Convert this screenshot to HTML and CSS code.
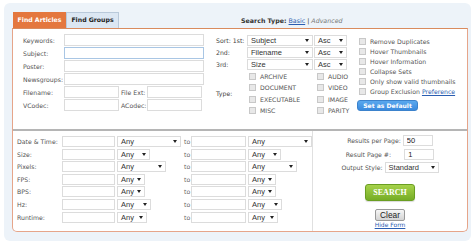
FILE: index.html
```html
<!DOCTYPE html>
<html>
<head>
  <title>Find Articles</title>
  <link rel="stylesheet" href="styles.css">
</head>
<body>
  <div class="wrap">
    <div class="tabbar">
      <span class="tab active">Find Articles</span>
      <span class="tab other">Find Groups</span>
      <div class="stype"><b>Search Type:</b> <a href="#">Basic</a> | <i>Advanced</i></div>
    </div>

    <div class="panel">
      <div class="upper">
        <div class="fields">
          <div class="row"><label>Keywords:</label><input class="inp wide" type="text"></div>
          <div class="row"><label>Subject:</label><input class="inp wide focus" type="text"></div>
          <div class="row"><label>Poster:</label><input class="inp wide" type="text"></div>
          <div class="row"><label>Newsgroups:</label><input class="inp wide" type="text"></div>
          <div class="row"><label>Filename:</label><input class="inp half" type="text"><label class="mid">File Ext:</label><input class="inp half" type="text"></div>
          <div class="row"><label>VCodec:</label><input class="inp half" type="text"><label class="mid">ACodec:</label><input class="inp half" type="text"></div>
        </div>

        <div class="sorts">
          <div class="row"><label>Sort: 1st:</label><span class="sel s-field">Subject</span><span class="sel s-dir">Asc</span></div>
          <div class="row"><label>2nd:</label><span class="sel s-field">Filename</span><span class="sel s-dir">Asc</span></div>
          <div class="row"><label>3rd:</label><span class="sel s-field">Size</span><span class="sel s-dir">Asc</span></div>
          <div class="types">
            <label>Type:</label>
            <div class="tgrid">
              <span class="cb">ARCHIVE</span><span class="cb">AUDIO</span>
              <span class="cb">DOCUMENT</span><span class="cb">VIDEO</span>
              <span class="cb">EXECUTABLE</span><span class="cb">IMAGE</span>
              <span class="cb">MISC</span><span class="cb">PARITY</span>
            </div>
          </div>
        </div>

        <div class="opts">
          <span class="cb">Remove Duplicates</span>
          <span class="cb">Hover Thumbnails</span>
          <span class="cb">Hover Information</span>
          <span class="cb">Collapse Sets</span>
          <span class="cb">Only show valid thumbnails</span>
          <span class="cb">Group Exclusion&nbsp;<a href="#">Preference</a></span>
          <button class="default">Set as Default</button>
        </div>
      </div>

      <div class="lower">
        <div class="ranges">
          <label>Date &amp; Time:</label><input class="inp r1" type="text"><span class="sel any-date">Any</span><span class="to">to</span><input class="inp r2" type="text"><span class="sel any-date">Any</span>
          <label>Size:</label><input class="inp r1" type="text"><span class="sel any-size">Any</span><span class="to">to</span><input class="inp r2" type="text"><span class="sel any-size">Any</span>
          <label>Pixels:</label><input class="inp r1" type="text"><span class="sel any-px">Any</span><span class="to">to</span><input class="inp r2" type="text"><span class="sel any-px">Any</span>
          <label>FPS:</label><input class="inp r1" type="text"><span class="sel any-fps">Any</span><span class="to">to</span><input class="inp r2" type="text"><span class="sel any-fps">Any</span>
          <label>BPS:</label><input class="inp r1" type="text"><span class="sel any-fps">Any</span><span class="to">to</span><input class="inp r2" type="text"><span class="sel any-fps">Any</span>
          <label>Hz:</label><input class="inp r1" type="text"><span class="sel any-hz">Any</span><span class="to">to</span><input class="inp r2" type="text"><span class="sel any-hz">Any</span>
          <label>Runtime:</label><input class="inp r1" type="text"><span class="sel any-run">Any</span><span class="to">to</span><input class="inp r2" type="text"><span class="sel any-run">Any</span>
        </div>

        <div class="actions">
          <div class="arow"><label>Results per Page:</label><input class="inp per" type="text" value="50"></div>
          <div class="arow"><label class="pg">Result Page #:</label><input class="inp per" type="text" value="1"></div>
          <div class="arow"><label>Output Style:</label><span class="sel out">Standard</span></div>
          <button class="search">SEARCH</button>
          <button class="clear">Clear</button>
          <a class="hide" href="#">Hide Form</a>
        </div>
      </div>
    </div>
  </div>
</body>
</html>
```

FILE: styles.css
```css
body { margin: 0; background: #fff; font-family: "DejaVu Sans", Verdana, sans-serif; font-size: 6.2px; color: #555; }
a { color: #2a5db0; }

.wrap { margin: 3px 3px 5px 4px; padding: 9px 3px 9px 8px; background: #edf3f9; border-radius: 6px; }

.tabbar { display: flex; align-items: center; height: 16px; }
.tab { height: 16px; line-height: 16px; width: 53px; text-align: center; font-weight: bold; box-sizing: border-box; }
.tab.active { margin-left: 1px; background: #e4773e; color: #fff; }
.tab.other { background: #dce7f3; color: #222; border: 1px solid #b9c9da; border-bottom: none; line-height: 14px; }
.stype { margin-left: 122px; color: #333; font-size: 6.3px; }
.stype b { color: #333; }
.stype i { color: #777; }

.panel { border: 1px solid #e6a58a; border-top-color: #d98b5e; background: #fff; border-radius: 0 0 5px 5px; }

.upper { display: flex; height: 100px; }
.row { display: flex; align-items: center; height: 12px; margin-bottom: 1px; }

.inp {
  height: 12px;
  box-sizing: border-box;
  margin: 0;
  border: 1px solid #dcdcdc;
  background: #fff;
  padding: 0 3px;
  font: 7.5px "Liberation Sans", Arial, sans-serif;
  color: #222;
  outline: none;
}
.inp.focus { border-color: #a9c6e4; }

.fields { width: 193px; padding: 5px 0 0 10px; }
.fields label { width: 41px; }
.fields label.mid { width: 28px; padding-left: 2px; box-sizing: border-box; }
.wide { width: 140px; }
.half { width: 55px; }

.sel {
  display: flex;
  align-items: center;
  height: 11px;
  box-sizing: border-box;
  border: 1px solid #dcdcdc;
  background: #fff;
  padding: 0 3px;
  font: 7.5px "Liberation Sans", Arial, sans-serif;
  color: #333;
}
.sel::after {
  content: "";
  margin-left: auto;
  border-left: 2px solid transparent;
  border-right: 2px solid transparent;
  border-top: 3px solid #222;
}

.sorts { width: 141px; padding-top: 6px; }
.sorts .row { height: 11px; }
.sorts label { width: 31px; color: #444; }
.s-field { width: 66px; margin-right: 1px; }
.s-dir { width: 33px; }

.types { display: flex; align-items: center; margin-top: 1px; }
.types > label { width: 33px; }
.tgrid { display: grid; grid-template-columns: 68px auto; grid-auto-rows: 11.3px; align-items: center; }

.cb { display: flex; align-items: center; white-space: nowrap; }
.cb::before {
  content: "";
  width: 7px;
  height: 7px;
  box-sizing: border-box;
  border: 1px solid #c8c8c8;
  background: #e8e8e8;
  margin-right: 4px;
}

.opts { display: flex; flex-direction: column; padding: 7px 0 0 2px; }
.opts .cb { height: 10px; }
.default {
  align-self: flex-start;
  margin: 4px 0 0 -2px;
  width: 61px;
  height: 11px;
  padding: 0;
  border: 1px solid #3b82cc;
  border-radius: 3px;
  background: linear-gradient(#5aa8ee, #3a8ade);
  color: #fff;
  font: bold 6.1px "DejaVu Sans", Verdana, sans-serif;
}

.lower { display: flex; border-top: 2px solid #b5b5b5; height: 100px; }
.ranges {
  display: grid;
  grid-template-columns: 45px 55px 65px 9px 57px 64px;
  grid-auto-rows: 11px;
  row-gap: 1.6px;
  align-items: center;
  align-content: start;
  padding: 5px 0 4px 4px;
  border-right: 1px solid #e0e0e0;
}
.r1 { width: 53px; height: 11px; }
.r2 { width: 55px; height: 11px; }
.to { padding-left: 2px; color: #666; }
.any-date { width: 64px; }
.any-size { width: 33px; }
.any-px { width: 49px; }
.any-fps { width: 28px; }
.any-hz { width: 34px; }
.any-run { width: 30px; }

.actions { flex: 1; display: flex; flex-direction: column; align-items: center; padding-top: 4px; }
.arow { display: flex; align-items: center; gap: 2px; height: 11px; margin-bottom: 2.5px; }
.arow label.pg { margin-right: 11px; }
.per { width: 30px; height: 11px; }
.out { width: 54px; }

.search {
  margin-top: 8px;
  width: 50px;
  height: 17px;
  padding: 0;
  border: 1px solid #6a9e22;
  border-radius: 3px;
  background: linear-gradient(#a6d24a, #76ad26);
  color: #fff;
  font: bold 8px "Liberation Serif", "Times New Roman", serif;
  box-shadow: 0 1px 1px rgba(0, 0, 0, 0.15);
}
.clear {
  margin-top: 8px;
  width: 30px;
  height: 12px;
  padding: 0;
  border: 1px solid #999;
  border-radius: 2px;
  background: linear-gradient(#f6f6f6, #d4d4d4);
  color: #222;
  font: 8.3px "Liberation Sans", Arial, sans-serif;
}
.hide { margin-top: 0; font-size: 6px; }
```
